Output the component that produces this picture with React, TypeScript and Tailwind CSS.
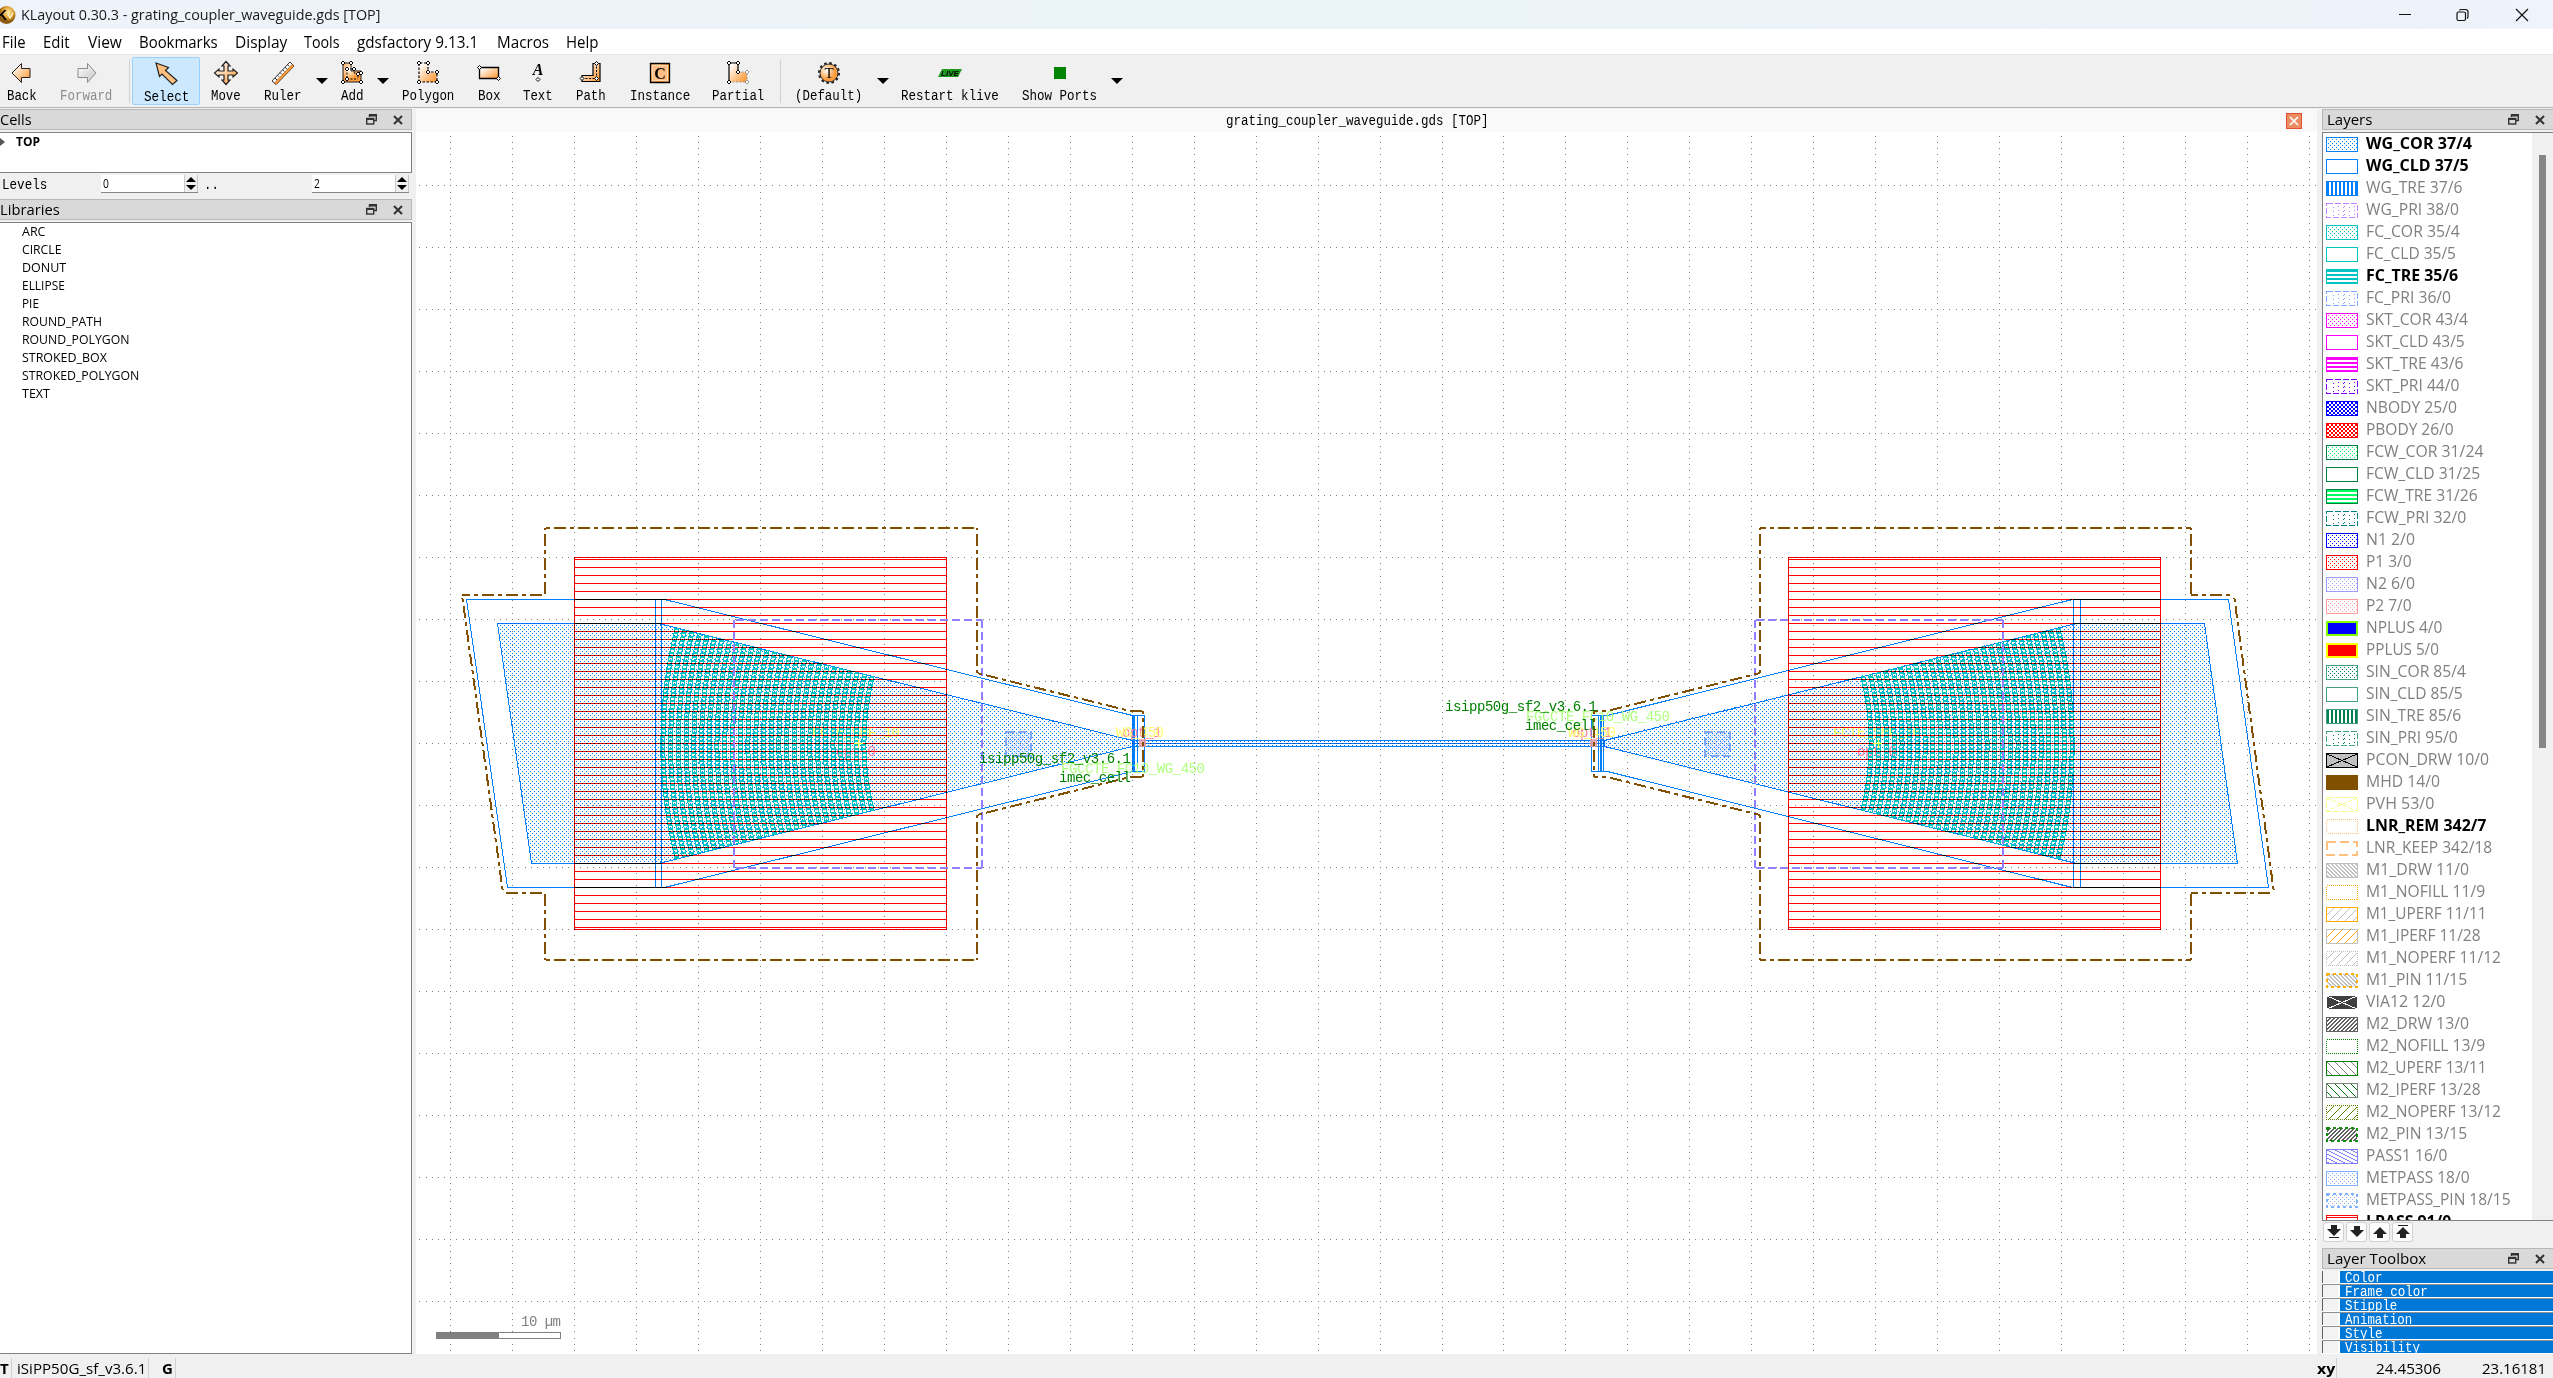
import React, { useLayoutEffect, useRef, useState } from "react";

const UI = "font-['Open_Sans','Noto_Sans',sans-serif]";
const MONO = "font-['Liberation_Mono',monospace]";

/* Text squeezed or stretched horizontally to occupy exactly w pixels. */
function Fit({ w, className = "", children }: { w: number; className?: string; children: React.ReactNode }) {
  const ref = useRef<HTMLDivElement>(null);
  const [k, setK] = useState(1);
  useLayoutEffect(() => {
    const n = ref.current ? ref.current.offsetWidth : 0;
    if (n) setK(w / n);
  }, [w]);
  return (
    <div className="shrink-0 whitespace-nowrap text-left" style={{ width: w }}>
      <div ref={ref} className={"w-max origin-left " + className} style={{ transform: `scaleX(${k})` }}>
        {children}
      </div>
    </div>
  );
}

function Mono({ children, className = "leading-[18px]" }: { children: string; className?: string }) {
  return (
    <Fit w={children.length * 7.5} className={MONO + " whitespace-pre text-[14px] " + className}>
      {children}
    </Fit>
  );
}

/* ---------- toolbar icons ---------- */
const O = "#ff9c3c";
function Defs() {
  return (
    <svg className="absolute h-0 w-0">
      <defs>
        <linearGradient id="og" x1="0" y1="0" x2="1" y2="1">
          <stop offset="0.1" stopColor="#fff" />
          <stop offset="0.9" stopColor={O} />
        </linearGradient>
        <linearGradient id="gg" x1="0" y1="0" x2="1" y2="1">
          <stop offset="0" stopColor="#fff" />
          <stop offset="1" stopColor="#c4c4c4" />
        </linearGradient>
        <radialGradient id="rg" cx="0.35" cy="0.35">
          <stop offset="0" stopColor="#fff" />
          <stop offset="1" stopColor={O} />
        </radialGradient>
        <radialGradient id="gold" cx="0.6" cy="0.35">
          <stop offset="0" stopColor="#fff3b0" />
          <stop offset="0.6" stopColor="#e0a030" />
          <stop offset="1" stopColor="#8a5a10" />
        </radialGradient>
      </defs>
    </svg>
  );
}

function Nodes({ pts, color = "#000" }: { pts: number[][]; color?: string }) {
  return (
    <g fill="#fff" stroke={color} strokeWidth="1">
      {pts.map(([x, y], i) => (
        <path key={i} d={`M${x} ${y - 2}l2 2l-2 2l-2 -2z`} />
      ))}
    </g>
  );
}

function Icon({ name }: { name: string }) {
  const body: Record<string, React.ReactNode> = {
    back: <path d="M2 12L11.500 2.500V7.500H20V16.500H11.500V21.500Z" fill="url(#og)" stroke="#222" />,
    forward: <path d="M21 12L12.500 2.500V7.500H3V16.500H12.500V21.500Z" fill="url(#gg)" stroke="#8c8c8c" />,
    select: <path d="M2 1L14.500 5.500L11.500 8.500L23 18.500L18.500 22.500L8 12L5.500 14.500Z" fill="#ffc080" stroke="#222" strokeWidth="1.200" />,
    move: (
      <path
        d="M12 .500L16 5H14V10H19V8L23.500 12L19 16V14H14V19H16L12 23.500L8 19H10V14H5V16L.500 12L5 8V10H10V5H8Z"
        fill="url(#og)"
        stroke="#222"
        strokeWidth="1.200"
      />
    ),
    ruler: (
      <>
        <path d="M1 20L19 1L23 5L5 23.500Z" fill="#fff" stroke="#333" />
        <path d="M3.500 22L21 3.500L23 5L5 23.500Z" fill={O} stroke="#8a4a10" strokeWidth="0.600" />
        <path d="M4 17l2 2M6.500 14.300l1.500 1.500M9 11.500l2 2M11.700 9l1.500 1.500M14 6.200l2 2M16.500 3.700l1.500 1.500" stroke="#222" />
      </>
    ),
    add: (
      <>
        <path d="M3 2H11V10H21V21H3Z" fill="url(#rg)" stroke="#222" />
        <path d="M7 8H14M7 8V18M7 18H18M14 8V12H18V18" fill="none" stroke="#000" strokeDasharray="2 1.500" />
        <Nodes pts={[[3, 2], [11, 2], [3, 21], [21, 21], [21, 12], [7, 8], [14, 8], [18, 13], [7, 18]]} />
      </>
    ),
    polygon: (
      <>
        <path d="M3 2H12V11H21V21H3Z" fill="url(#og)" />
        <path d="M12 2V11H21V21" fill="none" stroke="#fff" />
        <path d="M3 21V2H12V11H21V21H3" fill="none" stroke="#000" strokeWidth="1.200" strokeDasharray="2.500 1.500" />
        <Nodes pts={[[3, 2], [12, 2], [12, 11], [21, 11], [21, 21], [3, 21]]} />
      </>
    ),
    box: (
      <>
        <path d="M2.500 6.500H21.500V17.500H2.500Z" fill="url(#og)" stroke="#000" strokeWidth="1.300" />
        <Nodes pts={[[2.5, 6.5], [21.5, 17.5]]} />
      </>
    ),
    text: (
      <>
        <text x="12" y="14" textAnchor="middle" className="font-['Liberation_Serif',serif] text-[16px] font-bold italic">
          A
        </text>
        <Nodes pts={[[12, 18.5]]} />
      </>
    ),
    path: (
      <>
        <path d="M14 2.500H21V20.500H3V14.500H14Z" fill="url(#og)" stroke="#000" strokeWidth="1.200" />
        <path d="M17.500 2V17.500H3" fill="none" stroke="#000" strokeDasharray="2 1.500" />
        <Nodes pts={[[17.5, 2.5], [17.5, 17.5], [3, 17.5]]} />
      </>
    ),
    instance: (
      <>
        <path d="M2.500 2.500H21.500V21.500H2.500Z" fill="url(#rg)" stroke="#000" strokeWidth="1.300" />
        <rect x="4.500" y="4.500" width="15" height="15" fill="#ffbf86" stroke="#ffd9b0" />
        <text x="12" y="17.500" textAnchor="middle" className="font-['Liberation_Serif',serif] text-[16px] font-bold">
          C
        </text>
      </>
    ),
    partial: (
      <>
        <path d="M3 2H12V11H21V21H3Z" fill="url(#og)" />
        <path d="M12 11H21V21H3" fill="none" stroke="#999" strokeDasharray="2 1.500" />
        <path d="M3 21V2H12V11" fill="none" stroke="#000" strokeWidth="1.200" />
        <Nodes pts={[[21, 11], [21, 21]]} color="#999" />
        <Nodes pts={[[3, 2], [12, 2], [12, 11], [3, 21]]} />
      </>
    ),
    gear: (
      <>
        <circle cx="12" cy="12" r="9.500" fill="none" stroke="#222" strokeWidth="3" strokeDasharray="2.500 2.470" />
        <circle cx="12" cy="12" r="9" fill="url(#rg)" stroke="#333" />
        <text x="12" y="17" textAnchor="middle" className="font-['Liberation_Serif',serif] text-[15px]">
          T
        </text>
      </>
    ),
    live: (
      <>
        <path d="M4 8H24L20 16H0Z" fill="#1f9a1f" />
        <text x="12" y="14.800" textAnchor="middle" className="font-['Liberation_Sans',sans-serif] text-[8px] font-bold italic">
          LIVE
        </text>
      </>
    ),
    ports: <rect x="6" y="6" width="12" height="12" fill="#008400" />,
  };
  return (
    <svg width="24" height="24" viewBox="0 0 24 24" className="block overflow-visible">
      {body[name]}
    </svg>
  );
}

function Tool({ name, label, className, off }: { name: string; label: string; className: string; off?: boolean }) {
  return (
    <div className={"flex h-12 shrink-0 flex-col items-center pt-1 " + className}>
      <Icon name={name} />
      <div className="mt-[2px]">
        <Mono className={off ? "leading-[18px] text-[#8c8c8c]" : "leading-[18px] text-black"}>{label}</Mono>
      </div>
    </div>
  );
}

function Arrow({ className = "" }: { className?: string }) {
  return (
    <div className={"flex h-12 w-[15px] shrink-0 items-center justify-center " + className}>
      <svg width="12" height="6" viewBox="0 0 12 6" className="block">
        <path d="M0 0H12L6 6Z" />
      </svg>
    </div>
  );
}

/* ---------- dock widgets ---------- */
function DockHeader({ title, w, pad }: { title: string; w: number; pad: string }) {
  return (
    <div className={"flex h-[21px] shrink-0 items-center border border-[#b8b8b8] bg-[#d9d9d9] " + pad}>
      <Fit w={w} className={UI + " text-[15px] leading-[19px]"}>
        {title}
      </Fit>
      <svg width="11" height="11" viewBox="0 0 11 11" className="ml-auto block">
        <path d="M3.500 3V.700H10.300V6.500H8" fill="none" stroke="#333" strokeWidth="1.400" />
        <path d="M3 1.500H10.500" stroke="#333" strokeWidth="2" />
        <rect x=".700" y="4.500" width="7" height="5.500" fill="none" stroke="#333" strokeWidth="1.400" />
        <path d="M.500 5H8" stroke="#333" strokeWidth="2" />
      </svg>
      <svg width="10" height="10" viewBox="0 0 10 10" className="mr-2 ml-4 block">
        <path d="M1 1L9 9M9 1L1 9" stroke="#333" strokeWidth="2" />
      </svg>
    </div>
  );
}

function Spin({ value }: { value: string }) {
  return (
    <div className="flex h-[18px] w-[97px] shrink-0 items-stretch border-b border-[#868686] bg-white pl-0.5">
      <div className="flex-1">
        <Fit w={6} className={UI + " text-[12px] leading-[17px]"}>
          {value}
        </Fit>
      </div>
      <div className="flex w-[14px] flex-col items-center justify-center gap-[3px] border-x border-[#c8c8c8] bg-[#f0f0f0]">
        <svg width="10" height="5" viewBox="0 0 10 5">
          <path d="M0 5H10L5 0Z" />
        </svg>
        <svg width="10" height="5" viewBox="0 0 10 5">
          <path d="M0 0H10L5 5Z" />
        </svg>
      </div>
    </div>
  );
}

const LIBS: [string, number][] = [
  ["ARC", 24], ["CIRCLE", 39], ["DONUT", 44], ["ELLIPSE", 43], ["PIE", 17],
  ["ROUND_PATH", 80], ["ROUND_POLYGON", 108], ["STROKED_BOX", 84.5], ["STROKED_POLYGON", 117], ["TEXT", 28],
];

function LeftDock() {
  return (
    <div className="flex w-[412px] shrink-0 flex-col pt-px">
      <DockHeader title="Cells" w={32} pad="border-l-0" />
      <div className="mt-0.5 flex h-[41px] shrink-0 items-start border border-l-0 border-[#7f8187] bg-white">
        <svg width="5" height="8" viewBox="0 0 5 8" className="mt-[5px] mr-[11px]">
          <path d="M0 0L5 4L0 8Z" fill="#555" />
        </svg>
        <Fit w={24} className={UI + " text-[12.500px] leading-[18px] font-bold"}>
          TOP
        </Fit>
      </div>
      <div className="flex h-[26px] shrink-0 items-start pt-0.5 pl-0.5">
        <div className="w-[99px] pt-px">
          <Mono>Levels</Mono>
        </div>
        <Spin value="0" />
        <div className="w-[114px] pt-px pl-1.5">
          <Mono>..</Mono>
        </div>
        <Spin value="2" />
      </div>
      <DockHeader title="Libraries" w={60} pad="border-l-0" />
      <div className="mt-0.5 flex flex-1 flex-col border border-l-0 border-[#7f8187] bg-white pl-[22px]">
        {LIBS.map(([n, w]) => (
          <div key={n} className="h-[18px]">
            <Fit w={w} className={UI + " text-[12.500px] leading-[18px]"}>
              {n}
            </Fit>
          </div>
        ))}
      </div>
    </div>
  );
}

/* ---------- layer list ---------- */
type Layer = [string, number, string, string, string, string?, boolean?];
/* name, text width, fill kind, fill colour, frame colour, frame style, bold */
const LAYERS: Layer[] = [
  ["WG_COR 37/4", 106, "dots", "#0080ff", "#0080ff", "", true],
  ["WG_CLD 37/5", 103, "none", "#0080ff", "#0080ff", "", true],
  ["WG_TRE 37/6", 96, "vert", "#0080ff", "#0080ff"],
  ["WG_PRI 38/0", 93, "sparse", "#c080ff", "#c080ff", "dash"],
  ["FC_COR 35/4", 93.5, "dots", "#00c4c4", "#00c4c4"],
  ["FC_CLD 35/5", 90, "none", "#00c4c4", "#00c4c4"],
  ["FC_TRE 35/6", 92.5, "horz", "#00c4c4", "#00c4c4", "", true],
  ["FC_PRI 36/0", 85, "sparse", "#80a8ff", "#80a8ff", "dash"],
  ["SKT_COR 43/4", 102, "dots", "#ff00ff", "#ff00ff"],
  ["SKT_CLD 43/5", 99, "none", "#ff00ff", "#ff00ff"],
  ["SKT_TRE 43/6", 97, "horz", "#ff00ff", "#ff00ff"],
  ["SKT_PRI 44/0", 93.5, "sparse", "#8000ff", "#8000ff", "dash"],
  ["NBODY 25/0", 91, "check", "#0000ff", "#0000ff"],
  ["PBODY 26/0", 88, "check", "#ff0000", "#ff0000"],
  ["FCW_COR 31/24", 117, "dots", "#00ff60", "#008040"],
  ["FCW_CLD 31/25", 114, "none", "#008040", "#008040"],
  ["FCW_TRE 31/26", 112, "horz", "#00ff60", "#008040"],
  ["FCW_PRI 32/0", 100, "sparse", "#008080", "#008080", "dash"],
  ["N1 2/0", 49, "dots", "#0000ff", "#0000ff"],
  ["P1 3/0", 46, "dots", "#ff0000", "#ff0000"],
  ["N2 6/0", 49, "dots", "#9c9cff", "#9c9cff"],
  ["P2 7/0", 46, "dots", "#ff9c9c", "#ff9c9c"],
  ["NPLUS 4/0", 76, "solid", "#0000ff", "#80ff00", "thick"],
  ["PPLUS 5/0", 73, "solid", "#ff0000", "#ffff00", "thick"],
  ["SIN_COR 85/4", 100, "dots", "#008050", "#40a080"],
  ["SIN_CLD 85/5", 97, "none", "#40a080", "#40a080"],
  ["SIN_TRE 85/6", 95, "vert", "#008050", "#40a080"],
  ["SIN_PRI 95/0", 92, "sparse", "#008050", "#40a080", "dash"],
  ["PCON_DRW 10/0", 123, "crossgray", "#000000", "#000000"],
  ["MHD 14/0", 74, "solid", "#805000", "#805000"],
  ["PVH 53/0", 68, "cross", "#f4ff90", "#f4ff90", "dash"],
  ["LNR_REM 342/7", 120, "none", "#ffc080", "#ffc080", "dot", true],
  ["LNR_KEEP 342/18", 126, "none", "#ffc080", "#ffc080", "bigdash"],
  ["M1_DRW 11/0", 103, "back", "#c0c0c0", "#c0c0c0"],
  ["M1_NOFILL 11/9", 119, "none", "#ffae00", "#ffae00", "dot"],
  ["M1_UPERF 11/11", 121, "wfwd", "#c0c0c0", "#ffae00"],
  ["M1_IPERF 11/28", 115, "wfwd", "#ffae00", "#c0c0c0"],
  ["M1_NOPERF 11/12", 135, "wfwd", "#c0c0c0", "#c0c0c0", "dot"],
  ["M1_PIN 11/15", 101, "back", "#c0c0c0", "#ffae00", "bigdot"],
  ["VIA12 12/0", 79, "crossdark", "#ffffff", "#ffffff"],
  ["M2_DRW 13/0", 103, "fwd", "#606060", "#606060"],
  ["M2_NOFILL 13/9", 119, "none", "#008000", "#008000", "dot"],
  ["M2_UPERF 13/11", 121, "wback", "#808080", "#008000"],
  ["M2_IPERF 13/28", 115, "wback", "#008000", "#808080"],
  ["M2_NOPERF 13/12", 135, "wfwd", "#608000", "#608000", "dot"],
  ["M2_PIN 13/15", 101, "fwd", "#606060", "#109010", "bigdot"],
  ["PASS1 16/0", 81, "shallow", "#8080ff", "#8080ff"],
  ["METPASS 18/0", 104, "dots", "#80b0ff", "#80b0ff"],
  ["METPASS_PIN 18/15", 145, "dots", "#80b0ff", "#80b0ff", "bigdot"],
  ["LPASS 91/0", 85, "wide", "#ff0000", "#ff0000", "", true],
];

function fillPath(kind: string): string {
  let d = "";
  const px = (x: number, y: number, w = 1, h = 1) => {
    d += `M${x} ${y}h${w}v${h}h${-w}z`;
  };
  if (kind === "dots") for (let y = 2; y < 14; y += 2) for (let x = 2 + (y % 4 ? 0 : 2); x < 31; x += 4) px(x, y);
  if (kind === "check") for (let y = 1; y < 14; y += 2) for (let x = y % 4 === 1 ? 1 : 3; x < 31; x += 4) px(x, y, Math.min(2, 31 - x), Math.min(2, 14 - y));
  if (kind === "vert") for (let x = 1; x < 31; x += 4) px(x, 1, 2, 13);
  if (kind === "horz") for (let y = 1; y < 14; y += 4) px(1, y, 30, Math.min(2, 14 - y));
  if (kind === "wide") for (let y = 2; y < 14; y += 8) px(1, y, 30, 1);
  if (kind === "sparse") for (const x of [7, 12, 17, 18, 23, 28]) for (let y = 3; y < 14; y += 4) px(x, y + (x % 2));
  const diag = (step: number, dir: number, thick: boolean) => {
    for (let y = 1; y < 14; y++)
      for (let x = 1; x < 31; x++) {
        const m = (((x + dir * y) % step) + step) % step;
        if (m === 0 || (thick && m === 1)) px(x, y);
      }
  };
  if (kind === "back") diag(4, -1, true);
  if (kind === "fwd") diag(4, 1, true);
  if (kind === "wfwd") diag(8, 1, false);
  if (kind === "wback") diag(8, -1, false);
  if (kind === "shallow") for (let y = 1; y < 14; y++) for (let x = 1; x < 31; x++) if ((y * 2 - x + 80) % 8 < 2) px(x, y);
  return d;
}

function Swatch({ kind, fill, frame, style }: { kind: string; fill: string; frame: string; style?: string }) {
  const dash: Record<string, string> = { dash: "6 2", dot: "1 1", bigdash: "9 4", bigdot: "3 3" };
  const sw = style === "thick" || style === "bigdash" || style === "bigdot" ? 2 : 1;
  const cross = kind.startsWith("cross");
  return (
    <svg width="32" height="15" viewBox="0 0 32 15" shapeRendering="crispEdges" className="mt-[3px] block shrink-0">
      {kind === "solid" && <rect width="32" height="15" fill={fill} />}
      {kind === "crossgray" && <rect width="32" height="15" fill="#c0c0c0" />}
      {kind === "crossdark" && <rect width="32" height="15" fill="#404040" />}
      {cross && <path d="M1 1L31 14M31 1L1 14" stroke={fill} strokeDasharray={style ? "4 2" : undefined} />}
      <path d={fillPath(kind)} fill={fill} />
      <rect
        x={sw / 2}
        y={sw / 2}
        width={32 - sw}
        height={15 - sw}
        fill="none"
        stroke={frame}
        strokeWidth={sw}
        strokeDasharray={style ? dash[style] : undefined}
      />
    </svg>
  );
}

function MoveButton({ d }: { d: string }) {
  return (
    <div className="flex h-5 w-[21px] items-center justify-center rounded-[3px] border border-[#d0d0d0] bg-[#fcfcfc]">
      <svg width="14" height="14" viewBox="0 0 14 14">
        <path d={d} fill="#222" />
      </svg>
    </div>
  );
}

function RightDock() {
  return (
    <div className="flex w-[231px] shrink-0 flex-col pt-px">
      <DockHeader title="Layers" w={45} pad="border-r-0 pl-1" />
      <div className="mt-0.5 flex h-[1089px] shrink-0 overflow-hidden border border-r-0 border-[#7f8187] bg-white">
        <div className="flex-1 overflow-hidden pt-px">
          {LAYERS.map(([n, w, kind, fill, frame, style, bold]) => (
            <div key={n} className="flex h-[22px] items-start gap-2 pl-[3px]">
              <Swatch kind={kind} fill={fill} frame={frame} style={style} />
              <Fit w={w} className={UI + " text-[15.500px] leading-[19px] " + (bold ? "font-bold text-black" : "text-[#808080]")}>
                {n}
              </Fit>
            </div>
          ))}
        </div>
        <div className="w-[21px] bg-[#f0f0f0] pt-[22px] pl-[7px]">
          <div className="h-[593px] w-[7px] bg-[#868686]" />
        </div>
      </div>
      <div className="flex h-[27px] shrink-0 gap-0.5 pt-px pl-px">
        <MoveButton d="M4 0H10V4H14L7 11L0 4H4ZM2 12H12V13H2Z" />
        <MoveButton d="M4 1H10V5H14L7 12L0 5H4Z" />
        <MoveButton d="M7 2L14 9H10V13H4V9H0Z" />
        <MoveButton d="M2 0H12V1H2ZM7 2L14 9H10V13H4V9H0Z" />
      </div>
      <DockHeader title="Layer Toolbox" w={99} pad="border-r-0 pl-1" />
      <div className="mt-0.5 flex flex-1 flex-col overflow-hidden">
        {["Color", "Frame color", "Stipple", "Animation", "Style", "Visibility"].map((t) => (
          <div key={t} className="flex h-[14px] shrink-0 border-b border-[#909090] bg-white pb-px">
            <div className="mr-px w-[17px] border-r border-l border-r-white border-l-[#606060] bg-[#f3f3f3]" />
            <div className="flex-1 overflow-hidden bg-[#0078d7] pl-[5px]">
              <Mono className="leading-[14px] text-white">{t}</Mono>
            </div>
          </div>
        ))}
      </div>
    </div>
  );
}

/* ---------- layout view ---------- */
type Pt = [number, number];

/* Splits a line into dashes whose phase is locked to the view's pixel grid. */
function dashed(a: Pt, b: Pt, period: number, runs: [number, number][], phX: number, phY: number): string {
  const horiz = Math.abs(b[0] - a[0]) >= Math.abs(b[1] - a[1]);
  const i = horiz ? 0 : 1;
  const [p, q] = a[i] <= b[i] ? [a, b] : [b, a];
  const ph = horiz ? phX : phY;
  const at = (t: number): string => {
    const f = (t - p[i]) / (q[i] - p[i]);
    return `${(p[0] + (q[0] - p[0]) * f).toFixed(2)} ${(p[1] + (q[1] - p[1]) * f).toFixed(2)}`;
  };
  let d = "";
  for (let s = Math.floor((p[i] - ph) / period) * period + ph; s < q[i]; s += period)
    for (const [o, len] of runs) {
      const lo = Math.max(p[i], s + o);
      const hi = Math.min(q[i], s + o + len);
      if (hi > lo) d += `M${at(lo)}L${at(hi)}`;
    }
  return d;
}

function dashedPoly(pts: Pt[], period: number, runs: [number, number][], phX: number, phY: number) {
  return pts.map((p, k) => dashed(p, pts[(k + 1) % pts.length], period, runs, phX, phY)).join("");
}

const DASHDOT: [number, number][] = [[0, 12], [16, 4]];
const DASH: [number, number][] = [[0, 8]];

const leftOutline = dashedPoly(
  [[545, 528], [977, 528], [977, 673], [1130, 711], [1143, 711], [1143, 777], [1130, 777], [977, 815], [977, 960], [545, 960], [545, 893], [503, 893], [462, 595], [545, 595]],
  24, DASHDOT, 2, 6
);
const rightOutline = dashedPoly(
  [[1760, 528], [2191, 528], [2191, 595], [2234, 595], [2274, 893], [2191, 893], [2191, 960], [1760, 960], [1760, 815], [1607, 777], [1594, 777], [1594, 711], [1607, 711], [1760, 673]],
  24, DASHDOT, 2, 6
);
const purple =
  dashedPoly([[734, 620], [982, 620], [982, 868], [734, 868]], 12, DASH, 4, 8) +
  dashedPoly([[1755, 620], [2003, 620], [2003, 868], [1755, 868]], 12, DASH, 4, 8);

function gridPath(): string {
  let d = "";
  const S = 61.95;
  const s = S / 10;
  for (let i = 0; i < 31; i++) {
    const x = Math.floor(450.8 + i * S);
    for (let j = -8; j < 189; j++) d += `M${x} ${Math.floor(185.9 + j * s)}h1v1h-1z`;
  }
  for (let j = 0; j < 19; j++) {
    const y = Math.floor(185.9 + j * S);
    for (let i = -5; i < 302; i++) d += `M${Math.floor(450.8 + i * s)} ${y}h1v1h-1z`;
  }
  return d;
}

/* Concentric grating teeth; dir is -1 when they open to the left. */
function grating(cx: number, dir: number): string {
  let d = "";
  const cy = 743.5;
  const A = 0.2415;
  const c = Math.cos(A);
  const n = Math.sin(A);
  const teeth = 27;
  for (let k = 0; k < teeth; k++) {
    const r0 = 278 + (k * (479 - 278)) / (teeth - 1);
    const r1 = r0 + 4;
    const p = (r: number, s: number) => `${(cx + dir * r * c).toFixed(2)} ${(cy + s * r * n).toFixed(2)}`;
    const sweep = dir < 0 ? 0 : 1;
    d += `M${p(r0, -1)}A${r0} ${r0} 0 0 ${sweep} ${p(r0, 1)}L${p(r1, 1)}A${r1} ${r1} 0 0 ${1 - sweep} ${p(r1, -1)}Z`;
  }
  return d;
}

function redLines(x0: number, x1: number): string {
  let d = `M${x0} 557H${x1}V929H${x0}Z`;
  for (let y = 559; y < 929; y += 8) d += `M${x0} ${y}H${x1}`;
  return d;
}

function Label({ x, y, n, fill }: { x: number; y: number; n: string; fill: string }) {
  return (
    <text x={x} y={y} fill={fill} textLength={n.length * 8} className="font-['Liberation_Mono',monospace] text-[14px]">
      {n}
    </text>
  );
}

function LayoutView() {
  return (
    <svg width="1901" height="1222" viewBox="416 132 1901 1222" className="block shrink-0 bg-white" shapeRendering="crispEdges">
      <defs>
        <pattern id="dotfill" width="4" height="4" patternUnits="userSpaceOnUse">
          <rect x="0" y="1" width="1" height="1" fill="#0080ff" />
          <rect x="2" y="3" width="1" height="1" fill="#0080ff" />
        </pattern>
        <pattern id="rungs" width="8" height="4" patternUnits="userSpaceOnUse">
          <rect x="0" y="0" width="8" height="2" fill="#00c4c4" />
        </pattern>
        <pattern id="hatch" width="8" height="8" patternUnits="userSpaceOnUse">
          <path d="M0 8L8 0M0 5L5 0M3 8L8 3" stroke="#80a8ff" strokeWidth="0.700" fill="none" />
        </pattern>
      </defs>
      <path d={gridPath()} fill="#808080" />

      <g className="mix-blend-multiply">
        <path d="M498 623H658L1132 740H1600L2076 623H2204L2237 863H2076L1600 746H1132L658 863H531Z" fill="url(#dotfill)" />
      </g>
      <g className="mix-blend-multiply" fill="none" stroke="#0080ff" strokeWidth="1">
        <g transform="translate(.5 .5)">
          <path d="M658 623H497L531 863H658L1132 746V740Z" />
          <path d="M664 599H466L507 887H664M664 599L1132 715H1144V771H1132L664 887" />
          <path d="M655 599V887M661 599V887M1137 715V771" />
          <path d="M1132 740H1603M1132 743H1600M1132 746H1603" />
          <path d="M2076 623H2204L2237 863H2076L1604 746V740Z" />
          <path d="M2072 599H2228L2268 887H2072M2072 599L1607 715H1591V771H1607L2072 887" />
          <path d="M2073 599V887M2080 599V887M1598 715V771M1603 715V771" />
        </g>
        <path d="M1133.500 715V771" strokeWidth="3" />
        <path d="M1601 715V771" strokeWidth="2" />
      </g>

      <Label x={812} y={737} n="FCTE_SMF_10" fill="#ffff60" />
      <Label x={1833} y={737} n="FCTE_SMF_10" fill="#ffff60" />
      <Label x={836} y={756} n="opt_0" fill="#ff80a0" />
      <Label x={1857} y={756} n="opt_0" fill="#ff80a0" />
      <g fill="url(#rungs)" stroke="#00c4c4" strokeWidth="1">
        <path d={grating(1144, -1)} />
        <path d={grating(1591, 1)} />
      </g>
      <g className="mix-blend-multiply" fill="none" stroke="#ff0000" strokeWidth="1" transform="translate(.5 .5)">
        <path d={redLines(574, 946)} />
        <path d={redLines(1788, 2160)} />
      </g>

      <path d={purple} stroke="#9080ff" strokeWidth="2" fill="none" />
      <g stroke="#80a8ff" strokeWidth="2" strokeDasharray="8 4" fill="url(#hatch)">
        <rect x="1006" y="732" width="25" height="24" />
        <rect x="1705" y="732" width="25" height="24" />
      </g>

      <Label x={1122} y={737} n="opt_1" fill="#ff80a0" />
      <Label x={1572} y={737} n="opt_1" fill="#ff80a0" />
      <Label x={1116} y={737} n="WG_450" fill="#ffff70" />
      <Label x={1568} y={737} n="WG_450" fill="#ffff70" />
      <Label x={1061} y={773} n="FGCCTE_FC10_WG_450" fill="#b0ff80" />
      <Label x={1526} y={721} n="FGCCTE_FC10_WG_450" fill="#b0ff80" />
      <path d="M854 743.500h9M858.500 739v9M1873 743.500h9M1878.500 739v9" stroke="#ffff40" strokeWidth="1" />
      <path d="M1139 739h7v8h-7zM1590 739h7v8h-7z" fill="#ff9c9c" fillOpacity="0.800" />

      <path d={leftOutline + rightOutline} stroke="#805000" strokeWidth="2" fill="none" />

      <Label x={979} y={763} n="isipp50g_sf2_v3.6.1" fill="#008000" />
      <Label x={1059} y={782} n="imec_cell" fill="#008000" />
      <Label x={1445} y={711} n="isipp50g_sf2_v3.6.1" fill="#008000" />
      <Label x={1525} y={730} n="imec_cell" fill="#008000" />

      <Label x={521} y={1326} n="10 µm" fill="#808080" />
      <rect x="436.500" y="1332.500" width="124" height="6" fill="#fff" stroke="#808080" />
      <rect x="436" y="1332" width="63" height="7" fill="#808080" />
    </svg>
  );
}

const MENUS: [string, number, string][] = [
  ["File", 24, "w-[41px]"],
  ["Edit", 27, "w-[45px]"],
  ["View", 34, "w-[51px]"],
  ["Bookmarks", 79, "w-[96px]"],
  ["Display", 52, "w-[69px]"],
  ["Tools", 36, "w-[53px]"],
  ["gdsfactory 9.13.1", 121, "w-[140px]"],
  ["Macros", 52, "w-[69px]"],
  ["Help", 33, "w-[60px]"],
];

const Sep = ({ className = "" }: { className?: string }) => <div className={"w-px shrink-0 bg-[#d0d0d0] " + className} />;

export default function App() {
  return (
    <div className="flex h-[1378px] w-[2553px] flex-col overflow-hidden bg-[#f0f0f0] text-black">
      <Defs />
      <div className="flex h-[29px] shrink-0 items-center bg-linear-to-r from-[#eff3fb] via-[#ebf4f7] to-[#eff3fb]">
        <svg width="16" height="20" viewBox="0 0 16 20" className="mr-[5px] block">
          <circle cx="6.500" cy="10" r="9" fill="url(#gold)" />
          <text x="-3" y="15" className="font-['Liberation_Sans',sans-serif] text-[14px] font-bold">
            K
          </text>
          <path d="M8 9l2 4l3 -5" fill="none" stroke="#fff2c0" strokeWidth="1.500" />
        </svg>
        <Fit w={359} className={UI + " text-[14.500px] leading-[26px] text-[#1a1a1a]"}>
          KLayout 0.30.3 - grating_coupler_waveguide.gds [TOP]
        </Fit>
        <svg width="130" height="14" viewBox="0 0 130 14" className="mr-[24px] ml-auto block">
          <path d="M0 6.500H12" stroke="#111" />
          <rect x="58" y="4" width="8.500" height="8.500" rx="1.500" fill="none" stroke="#111" strokeWidth="1.200" />
          <path d="M60.500 2.500Q61 1.500 62 1.500H66.500Q69 1.500 69 4V8.500Q69 10 68 10.500" fill="none" stroke="#111" strokeWidth="1.200" />
          <path d="M117 1L129 13M129 1L117 13" stroke="#111" strokeWidth="1.200" />
        </svg>
      </div>
      <div className="flex h-[25px] shrink-0 items-center bg-white pl-0.5">
        {MENUS.map(([t, w, cls]) => (
          <div key={t} className={"shrink-0 " + cls}>
            <Fit w={w} className={UI + " text-[15.500px] leading-6"}>
              {t}
            </Fit>
          </div>
        ))}
      </div>
      <div className="flex h-[54px] shrink-0 items-start border-t border-b border-t-[#e8e8e8] border-b-[#b4b4b4] pt-[2px]">
        <Tool name="back" label="Back" className="w-11" />
        <Tool name="forward" label="Forward" className="w-[85px]" off />
        <Sep className="mt-[3px] mr-[2px] h-[43px]" />
        <Tool name="select" label="Select" className="w-[68px] rounded-[2px] border border-[#99d1ff] bg-[#cce8ff]" />
        <Tool name="move" label="Move" className="w-[52px]" />
        <Tool name="ruler" label="Ruler" className="w-[62px]" />
        <Arrow />
        <Tool name="add" label="Add" className="w-[46px]" />
        <Arrow />
        <Tool name="polygon" label="Polygon" className="w-[76px]" />
        <Tool name="box" label="Box" className="w-[46px]" />
        <Tool name="text" label="Text" className="w-[52px]" />
        <Tool name="path" label="Path" className="w-[54px]" />
        <Tool name="instance" label="Instance" className="w-[83px]" />
        <Tool name="partial" label="Partial" className="w-[74px]" />
        <Sep className="mt-[3px] mr-[5px] ml-[5px] h-[43px]" />
        <Tool name="gear" label="(Default)" className="w-[86px]" />
        <Arrow className="ml-[3px]" />
        <Tool name="live" label="Restart klive" className="w-[120px]" />
        <Tool name="ports" label="Show Ports" className="w-[99px]" />
        <Arrow />
      </div>
      <div className="flex h-[1246px] shrink-0">
        <LeftDock />
        <div className="ml-1 flex w-[1901px] shrink-0 flex-col pt-px">
          <div className="flex h-[23px] shrink-0 items-center bg-[#f9f9f9]">
            <div className="ml-[810px]">
              <Mono>grating_coupler_waveguide.gds [TOP]</Mono>
            </div>
            <svg width="16" height="16" viewBox="0 0 16 16" className="mr-[15px] ml-auto block">
              <rect x=".500" y=".500" width="15" height="15" fill="#ec8a62" stroke="#e0502c" />
              <path d="M4 4L12 12M12 4L4 12" stroke="#fff" strokeWidth="1.700" />
            </svg>
          </div>
          <LayoutView />
        </div>
        <div className="ml-[5px] flex">
          <RightDock />
        </div>
      </div>
      <div className="flex h-[24px] shrink-0 items-center pt-1">
        <Fit w={9} className={UI + " text-[15px] leading-5 font-bold"}>T</Fit>
        <Sep className="mr-[5px] ml-[2px] h-5" />
        <Fit w={129} className={UI + " text-[15px] leading-5"}>iSiPP50G_sf_v3.6.1</Fit>
        <Sep className="mr-[13px] ml-[2px] h-5" />
        <Fit w={11} className={UI + " text-[15px] leading-5 font-bold"}>G</Fit>
        <Sep className="ml-[2px] h-5" />
        <div className="ml-auto">
          <Fit w={18} className={UI + " text-[15px] leading-5 font-bold"}>xy</Fit>
        </div>
        <Sep className="mr-[39px] ml-px h-5" />
        <Fit w={65} className={UI + " text-[15px] leading-5"}>24.45306</Fit>
        <div className="mr-[7px] ml-[41px]">
          <Fit w={64} className={UI + " text-[15px] leading-5"}>23.16181</Fit>
        </div>
      </div>
    </div>
  );
}
